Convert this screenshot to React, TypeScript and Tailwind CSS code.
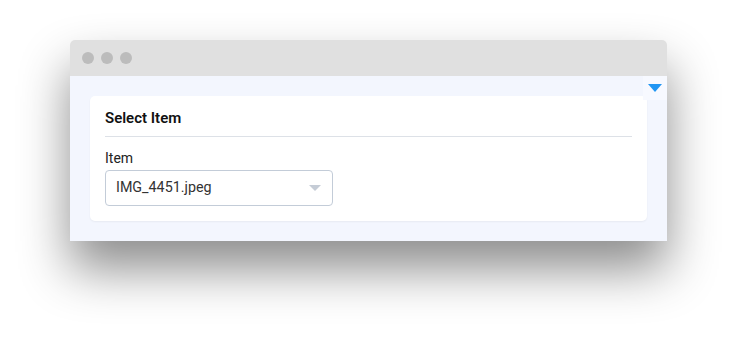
import React from 'react';

const App: React.FC = () => {
  return (
    <div className="w-[737px] h-[341px] bg-white pt-[40px] pl-[70px]" style={{ fontFamily: 'Roboto, "Liberation Sans", sans-serif' }}>
      <div className="w-[597px] rounded-t-[5px] shadow-[0_28px_50px_rgba(0,0,0,0.45)]">
        {/* Title bar */}
        <div className="h-[36px] bg-[#e0e0e0] rounded-t-[5px] flex items-center gap-[7px] pl-[12px]">
          <span className="w-[12px] h-[12px] rounded-full bg-[#bcbcbc]" />
          <span className="w-[12px] h-[12px] rounded-full bg-[#bcbcbc]" />
          <span className="w-[12px] h-[12px] rounded-full bg-[#bcbcbc]" />
        </div>

        {/* Content */}
        <div className="relative bg-[#f3f6fe] pt-[20px] pb-[20px] px-[20px]">
          <div className="absolute right-0 top-0 w-[24px] h-[24px] bg-[#f7f9ff] flex items-center justify-center">
            <svg width="14" height="9" viewBox="0 0 14 9">
              <path d="M0 0 L14 0 L7 8 Z" fill="#2196f3" />
            </svg>
          </div>

          <div className="bg-white rounded-[5px] shadow-[0_1px_2px_rgba(0,0,0,0.05)] px-[15px] pt-[13px] pb-[15px]">
            <div className="text-[15px] font-semibold text-[#111] leading-[18px]">Select Item</div>
            <div className="h-px bg-[#dde1e7] mt-[9px]" />
            <div className="text-[14px] text-[#222] mt-[12px] leading-[18px]">Item</div>
            <div className="mt-[3px] w-[228px] h-[36px] border border-[#c3ccd8] rounded-[4px] flex items-center justify-between pl-[10px] pr-[11px]">
              <span className="text-[14.3px] text-[#333]">IMG_4451.jpeg</span>
              <svg width="12" height="7" viewBox="0 0 12 7">
                <path d="M0 0 L12 0 L6 6 Z" fill="#c5ccd6" />
              </svg>
            </div>
          </div>
        </div>
      </div>
    </div>
  );
};

export default App;
